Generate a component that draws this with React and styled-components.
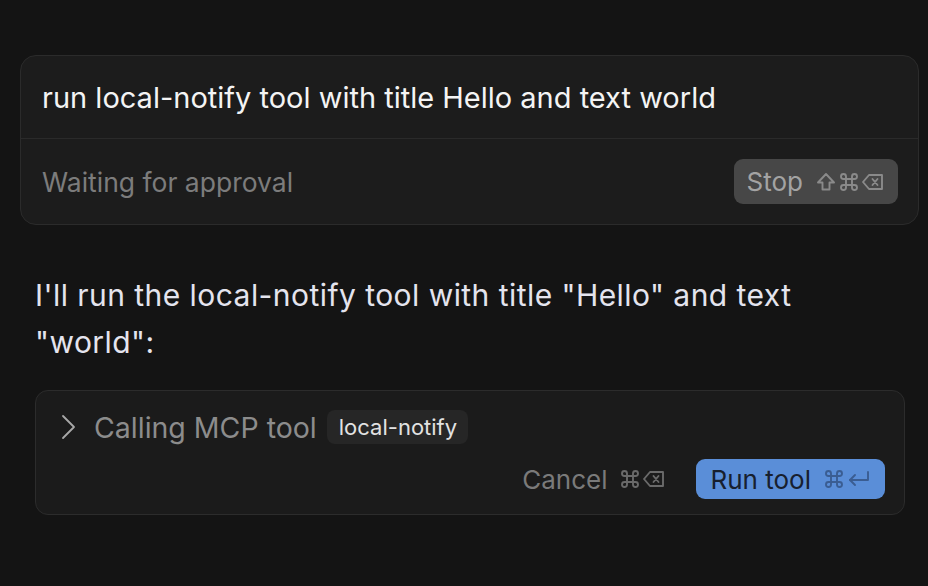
import React from "react";
import styled, { createGlobalStyle } from "styled-components";

const GlobalStyle = createGlobalStyle`
  html, body {
    margin: 0;
    padding: 0;
    background: #141414;
  }
  body {
    font-family: Inter, "Noto Sans", "Liberation Sans", sans-serif;
    -webkit-font-smoothing: antialiased;
  }
`;

const Page = styled.div`
  width: 928px;
  height: 586px;
  box-sizing: border-box;
  padding: 55px 9px 0 20px;
  background: #141414;
  overflow: hidden;
`;

const PromptCard = styled.div`
  background: #1c1c1c;
  border: 1px solid #2b2b2b;
  border-radius: 16px;
  width: 899px;
  box-sizing: border-box;
`;

const PromptText = styled.div`
  height: 82px;
  display: flex;
  align-items: center;
  padding: 0 21px;
  font-size: 29px;
  color: #f4f4f4;
  border-bottom: 1px solid #2a2a2a;
`;

const StatusRow = styled.div`
  height: 85px;
  display: flex;
  align-items: center;
  justify-content: space-between;
  padding: 0 20px 0 21px;
`;

const StatusText = styled.span`
  font-size: 26.5px;
  color: #7c7c7c;
`;

const KeyButton = styled.div`
  display: flex;
  align-items: center;
  height: ${({ $h }) => $h}px;
  padding: 0 ${({ $pr }) => $pr}px 0 ${({ $pl }) => $pl}px;
  border-radius: 9px;
  background: ${({ $bg }) => $bg};
  color: ${({ $fg }) => $fg};
  font-size: 26px;
  gap: 12px;
  box-sizing: border-box;
`;

const Keys = styled.span`
  display: flex;
  align-items: center;
  gap: 1px;
  color: ${({ $c }) => $c};
`;

const Message = styled.p`
  margin: 47px 0 0 15px;
  width: 820px;
  font-size: 30px;
  letter-spacing: 0.45px;
  line-height: 47px;
  color: #e4e4ee;
`;

const ToolCard = styled.div`
  margin: 24px 0 0 15px;
  width: 870px;
  box-sizing: border-box;
  background: #1b1b1b;
  border: 1px solid #2c2c2c;
  border-radius: 13px;
  padding: 19px 19px 15px 22px;
  display: flex;
  flex-direction: column;
  gap: 15px;
`;

const ToolHeader = styled.div`
  display: flex;
  align-items: center;
  height: 34px;
`;

const Chevron = styled.svg`
  width: 22px;
  height: 26px;
  margin-right: 14px;
  flex-shrink: 0;
`;

const ToolLabel = styled.span`
  font-size: 28.5px;
  color: #8c8c8c;
  margin-right: 10px;
`;

const Badge = styled.span`
  display: inline-flex;
  align-items: center;
  height: 34px;
  padding: 0 11px 0 12px;
  border-radius: 8px;
  background: #262626;
  color: #e2e2e2;
  font-size: 22px;
`;

const Actions = styled.div`
  display: flex;
  justify-content: flex-end;
  align-items: center;
  gap: 30px;
`;

const CancelButton = styled.div`
  display: flex;
  align-items: center;
  gap: 12px;
  font-size: 26px;
  color: #7a7a7a;
`;

const Icon = styled.svg`
  width: ${({ $w }) => $w || 22}px;
  height: 22px;
  fill: none;
  stroke: currentColor;
  stroke-width: 1.9;
  stroke-linecap: round;
  stroke-linejoin: round;
`;

const ShiftIcon = () => (
  <Icon viewBox="0 0 22 22">
    <path d="M11 3 L19 11.5 L14.5 11.5 L14.5 18.5 L7.5 18.5 L7.5 11.5 L3 11.5 Z" />
  </Icon>
);

const CmdIcon = () => (
  <Icon viewBox="0 0 22 22">
    <path d="M8 8 L14 8 L14 14 L8 14 Z" />
    <path d="M8 8 L8 5.5 A2.5 2.5 0 1 0 5.5 8 Z" />
    <path d="M14 8 L14 5.5 A2.5 2.5 0 1 1 16.5 8 Z" />
    <path d="M8 14 L8 16.5 A2.5 2.5 0 1 1 5.5 14 Z" />
    <path d="M14 14 L14 16.5 A2.5 2.5 0 1 0 16.5 14 Z" />
  </Icon>
);

const DeleteIcon = () => (
  <Icon viewBox="0 0 24 22" $w={24}>
    <path d="M8 4 L21 4 L21 18 L8 18 L2 11 Z" />
    <path d="M11.5 8 L16.5 14 M16.5 8 L11.5 14" />
  </Icon>
);

const ReturnIcon = () => (
  <Icon viewBox="0 0 26 22" $w={26}>
    <path d="M22 4 L22 12 L4 12" />
    <path d="M9 7 L4 12 L9 17" />
  </Icon>
);

export default function App() {
  return (
    <>
      <GlobalStyle />
      <Page>
        <PromptCard>
          <PromptText>run local-notify tool with title Hello and text world</PromptText>
          <StatusRow>
            <StatusText>Waiting for approval</StatusText>
            <KeyButton $h={45} $pl={13} $pr={13} $bg="#474747" $fg="#a3a3a3">
              Stop
              <Keys $c="#8a8a8a">
                <ShiftIcon />
                <CmdIcon />
                <DeleteIcon />
              </Keys>
            </KeyButton>
          </StatusRow>
        </PromptCard>

        <Message>
          I'll run the local-notify tool with title "Hello" and text "world":
        </Message>

        <ToolCard>
          <ToolHeader>
            <Chevron viewBox="0 0 22 26">
              <path d="M5 2 L16 13 L5 24" fill="none" stroke="#a8a8a8" strokeWidth="1.8" strokeLinecap="round" strokeLinejoin="round" />
            </Chevron>
            <ToolLabel>Calling MCP tool</ToolLabel>
            <Badge>local-notify</Badge>
          </ToolHeader>
          <Actions>
            <CancelButton>
              Cancel
              <Keys $c="#6a6a6a">
                <CmdIcon />
                <DeleteIcon />
              </Keys>
            </CancelButton>
            <KeyButton $h={40} $pl={14} $pr={13} $bg="#5a8ed8" $fg="#17202e">
              Run tool
              <Keys $c="#3a5d92">
                <CmdIcon />
                <ReturnIcon />
              </Keys>
            </KeyButton>
          </Actions>
        </ToolCard>
      </Page>
    </>
  );
}
